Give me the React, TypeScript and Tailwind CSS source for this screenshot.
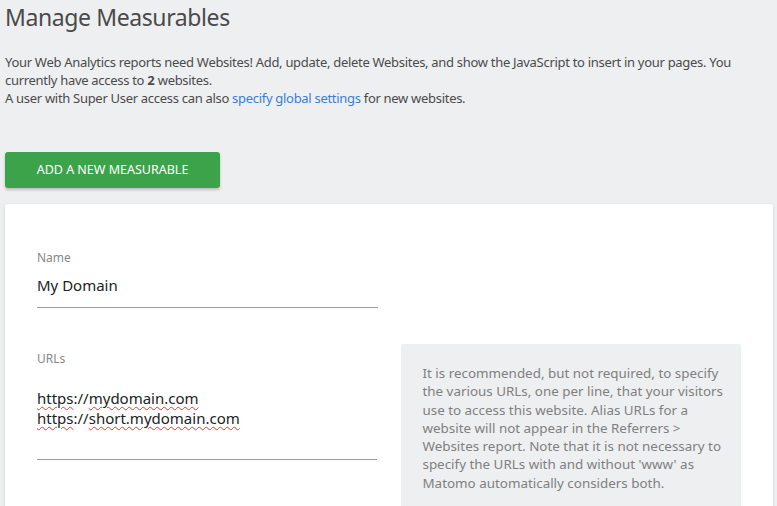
function UrlLine({ host }: { host: string }) {
  return (
    <div>
      <span className="underline decoration-wavy decoration-[#e53935] decoration-1 underline-offset-[2px]">https</span>
      ://
      <span className="underline decoration-wavy decoration-[#e53935] decoration-1 underline-offset-[2px]">{host}</span>
    </div>
  );
}

export default function App() {
  return (
    <div className="h-[506px] overflow-hidden bg-[#eeeff1] px-[5px] font-['Noto_Sans',sans-serif] text-[#4b4b4b]">
      <h1 className="pt-[1px] text-[23px] leading-[32px] tracking-[-0.4px] text-[#4a4a4a]">Manage Measurables</h1>

      <div className="mt-[20px] text-[13px] leading-[18px] tracking-[-0.3px]">
        <p>
          Your Web Analytics reports need Websites! Add, update, delete Websites, and show the JavaScript to insert in
          your pages. You currently have access to <b className="tracking-normal">2</b> websites.
        </p>
        <p>
          A user with Super User access can also{" "}
          <a className="text-[#3a7ed6]" href="#">
            specify global settings
          </a>{" "}
          for new websites.
        </p>
      </div>

      <button className="mt-[45px] h-[36px] w-[215px] rounded-[3px] bg-[#3ca34a] text-[12.5px] uppercase text-white shadow-[0_2px_3px_rgba(0,0,0,0.2)]">
        Add a new measurable
      </button>

      <div className="mt-[16px] h-[400px] w-[768px] rounded-[3px] bg-white px-[32px] pt-[46px] shadow-[0_1px_3px_rgba(0,0,0,0.15)]">
        <div className="w-[341px]">
          <label className="block text-[12px] leading-[16px] text-[#888]">Name</label>
          <div className="mt-[8px] pb-[11px] text-[15px] leading-[22px] text-[#222] border-b border-[#9e9e9e]">
            My Domain
          </div>
        </div>

        <div className="mt-[43px] flex gap-[24px]">
          <div className="w-[341px]">
            <label className="block text-[12px] leading-[16px] text-[#888]">URLs</label>
            <div className="mt-[21px] h-[72px] border-b border-[#9e9e9e] text-[15px] leading-[20px] text-[#222]">
              <UrlLine host="mydomain.com" />
              <UrlLine host="short.mydomain.com" />
            </div>
          </div>

          <div className="mt-[-7px] w-[340px] rounded-[2px] bg-[#eeeff1] pl-[21px] pr-[12px] pt-[20px] pb-[20px] text-[13.4px] leading-[18.3px] text-[#808080]">
            It is recommended, but not required, to specify the various URLs, one per line, that your visitors use to
            access this website. Alias URLs for a website will not appear in the Referrers &gt; Websites report. Note
            that it is not necessary to specify the URLs with and without 'www' as Matomo automatically considers both.
          </div>
        </div>
      </div>
    </div>
  );
}
